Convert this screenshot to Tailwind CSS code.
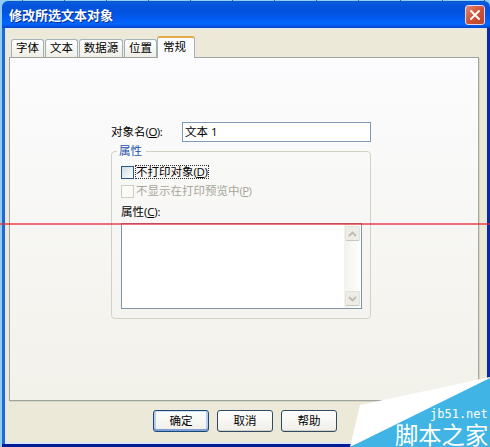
<!DOCTYPE html>
<html lang="zh-CN">
<head>
<meta charset="utf-8">
<title>修改所选文本对象</title>
<script src="https://cdn.jsdelivr.net/npm/@tailwindcss/browser@4"></script>
</head>
<body class="w-[490px] h-[447px] overflow-hidden bg-[#8fcdf3] text-black text-[11.5px] leading-[16px] font-['Open_Sans','Noto_Sans_CJK_SC',sans-serif]">
<div class="relative w-[490px] h-[447px] overflow-hidden flex flex-col">
  <!-- strip of the window behind -->
  <div class="absolute left-0 top-0 w-full h-[4px] -z-10 bg-[repeating-linear-gradient(90deg,transparent_0_22px,#34688f_22px_23px,transparent_23px_42px)]"></div>
  <header class="mt-px ml-[2px] h-[27px] shrink-0 rounded-t-[6px] flex items-center justify-between pl-[7px] pr-[5px] bg-[linear-gradient(#0a55c9_0%,#0a5be0_7%,#0553dd_18%,#0352dd_40%,#025cf3_65%,#0166ff_85%,#0152df_94%,#0445bd_100%)]">
    <h1 class="text-white font-bold text-[13px] leading-[18px] [text-shadow:1px_1px_0_#0a2f8c]">修改所选文本对象</h1>
    <button class="w-[20px] h-[20px] rounded-[3px] border border-[#e9d5e4] bg-[linear-gradient(135deg,#e08a78,#cf5235_50%,#b9442c)] flex items-center justify-center">
      <svg width="12" height="12" viewBox="0 0 12 12" stroke="#fff" stroke-width="1.9" stroke-linecap="round"><path d="M2 2L10 10M10 2L2 10"/></svg>
    </button>
  </header>
  <main class="ml-[2px] h-[416px] shrink-0 flex flex-col bg-[#ece9d8] border-l-[3px] border-l-[#2467cd] border-r-[3px] border-r-[#0a2c9f] pl-[4px] pr-[8px] pt-[8px] shadow-[inset_0_1px_0_#dfe7f2,inset_1px_0_0_#dce6f2,inset_-1px_0_0_#dce6f2,inset_0_-2px_0_#dce6f2]">
    <nav class="h-[22px] shrink-0 flex items-end pl-[2px] z-10">
      <div class="w-[33px] h-[18px] mr-px mb-px border border-b-0 border-[#a3b1b8] rounded-t-[3px] bg-gradient-to-b from-white to-[#efeee6] flex justify-center whitespace-nowrap">字体</div>
      <div class="w-[33px] h-[18px] mr-px mb-px border border-b-0 border-[#a3b1b8] rounded-t-[3px] bg-gradient-to-b from-white to-[#efeee6] flex justify-center whitespace-nowrap">文本</div>
      <div class="w-[44px] h-[18px] mr-px mb-px border border-b-0 border-[#a3b1b8] rounded-t-[3px] bg-gradient-to-b from-white to-[#efeee6] flex justify-center whitespace-nowrap">数据源</div>
      <div class="w-[33px] h-[18px] mb-px border border-b-0 border-[#a3b1b8] rounded-t-[3px] bg-gradient-to-b from-white to-[#efeee6] flex justify-center whitespace-nowrap">位置</div>
      <div class="w-[38px] h-[22px] border-x border-x-[#a3b1b8] border-t-2 border-t-[#e5a848] rounded-t-[3px] bg-[#fcfcfe] flex pl-[5px] pt-px whitespace-nowrap">常规</div>
    </nav>
    <section class="-mt-px w-[470px] h-[344px] shrink-0 border border-[#9fa3a0] border-r-[#a5a8a0] bg-gradient-to-b from-[#fcfcfe] to-[#f2f1ea] pl-[101px] pt-[64px] shadow-[1px_1px_0_#d8d4c4]">
      <label class="flex h-[20px] items-center">
        <span class="w-[71px] -mt-px whitespace-nowrap">对象名<span class="tracking-[-0.5px]">(<u>O</u>):</span></span>
        <span class="w-[189px] h-[20px] border border-[#7f9db9] bg-white pl-[2px] leading-[17px] whitespace-nowrap">文本 1</span>
      </label>
      <fieldset class="mt-[9px] w-[260px] h-[168px] border border-[#d2d2c3] rounded-[4px] pl-[9px]">
        <div class="-mt-[9px] -ml-[4px] w-[29px] h-[16px] px-[2px] bg-[#fafafa] text-[#1c52a8] whitespace-nowrap">属性</div>
        <div class="mt-[5px] h-[16px] flex items-center">
          <span class="size-[13px] border border-[#2b5a86] bg-[linear-gradient(135deg,#d3dbe2,#fff)] shrink-0"></span>
          <span class="ml-px h-[14px] leading-[12px] w-[74px] border border-dotted border-[#333] whitespace-nowrap">不打印对象<span class="tracking-[-0.4px]">(<u>D</u>)</span></span>
        </div>
        <div class="mt-[3px] h-[16px] flex items-center text-[#a7a698]">
          <span class="size-[13px] border border-[#cfcdbd] bg-[#fbfbf8] shrink-0"></span>
          <span class="ml-[2px] whitespace-nowrap">不显示在打印预览中<span class="tracking-[-0.7px]">(<u>P</u>)</span></span>
        </div>
        <div class="mt-[5px] h-[16px] whitespace-nowrap">属性<span class="tracking-[-0.2px]">(<u>C</u>):</span></div>
        <div class="mt-[3px] w-[241px] h-[86px] border border-[#7f93a5] bg-white flex justify-end">
          <div class="w-[17px] bg-[linear-gradient(90deg,#f3f2ec,#fefefd)] flex flex-col justify-between items-center py-[2px]">
            <span class="w-[15px] h-[15px] rounded-[2px] bg-[#edece5] border border-[#e3e2da] border-b-[#c4c9be] flex items-center justify-center"><svg width="9" height="6" viewBox="0 0 9 6" fill="none" stroke="#bdbcae" stroke-width="1.8"><path d="M1 5L4.500 1.500L8 5"/></svg></span>
            <span class="w-[15px] h-[15px] rounded-[2px] bg-[#edece5] border border-[#e3e2da] border-b-[#c4c9be] flex items-center justify-center"><svg width="9" height="6" viewBox="0 0 9 6" fill="none" stroke="#bdbcae" stroke-width="1.8"><path d="M1 1L4.500 4.500L8 1"/></svg></span>
          </div>
        </div>
      </fieldset>
    </section>
    <footer class="mt-[9px] ml-[144px] flex gap-[8px]">
      <button class="w-[56px] h-[22px] rounded-[3px] border border-[#1d4876] bg-gradient-to-b from-white to-[#efeee8] shadow-[inset_0_1px_0_#cee0f8,inset_0_-2px_0_#7d9fd8,inset_2px_0_0_#b5cdf0,inset_-2px_0_0_#b5cdf0]">确定</button>
      <button class="w-[56px] h-[22px] rounded-[3px] border border-[#2c4c66] bg-gradient-to-b from-white to-[#efeee8] shadow-[inset_0_-1px_0_#d6d0c5]">取消</button>
      <button class="w-[56px] h-[22px] rounded-[3px] border border-[#2c4c66] bg-gradient-to-b from-white to-[#efeee8] shadow-[inset_0_-1px_0_#d6d0c5]">帮助</button>
    </footer>
  </main>
  <div class="ml-[2px] h-[3px] shrink-0 bg-[#001d95]"></div>

  <!-- ruler line over the dialog -->
  <div class="absolute left-0 top-[223px] w-full h-[2px] bg-[#e32636]/65 z-20"></div>

  <!-- watermark in the corner -->
  <svg class="absolute left-[350px] top-[377px] z-20" width="140" height="70" viewBox="0 0 140 70">
    <path d="M0 70L10 28L140 0V10Z" fill="#fff"/>
    <path d="M0 70L140 1V70Z" fill="#41b4e6"/>
  </svg>
  <div class="absolute left-[430px] top-[407px] z-30 text-white text-[12px] leading-[14px] whitespace-nowrap font-['DejaVu_Sans_Mono',monospace]">jb51.net</div>
  <div class="absolute left-[395px] top-[422px] z-30 text-white text-[23.3px] leading-[24px] whitespace-nowrap font-['Noto_Sans_CJK_SC',sans-serif]">脚本之家</div>
</div>
</body>
</html>
